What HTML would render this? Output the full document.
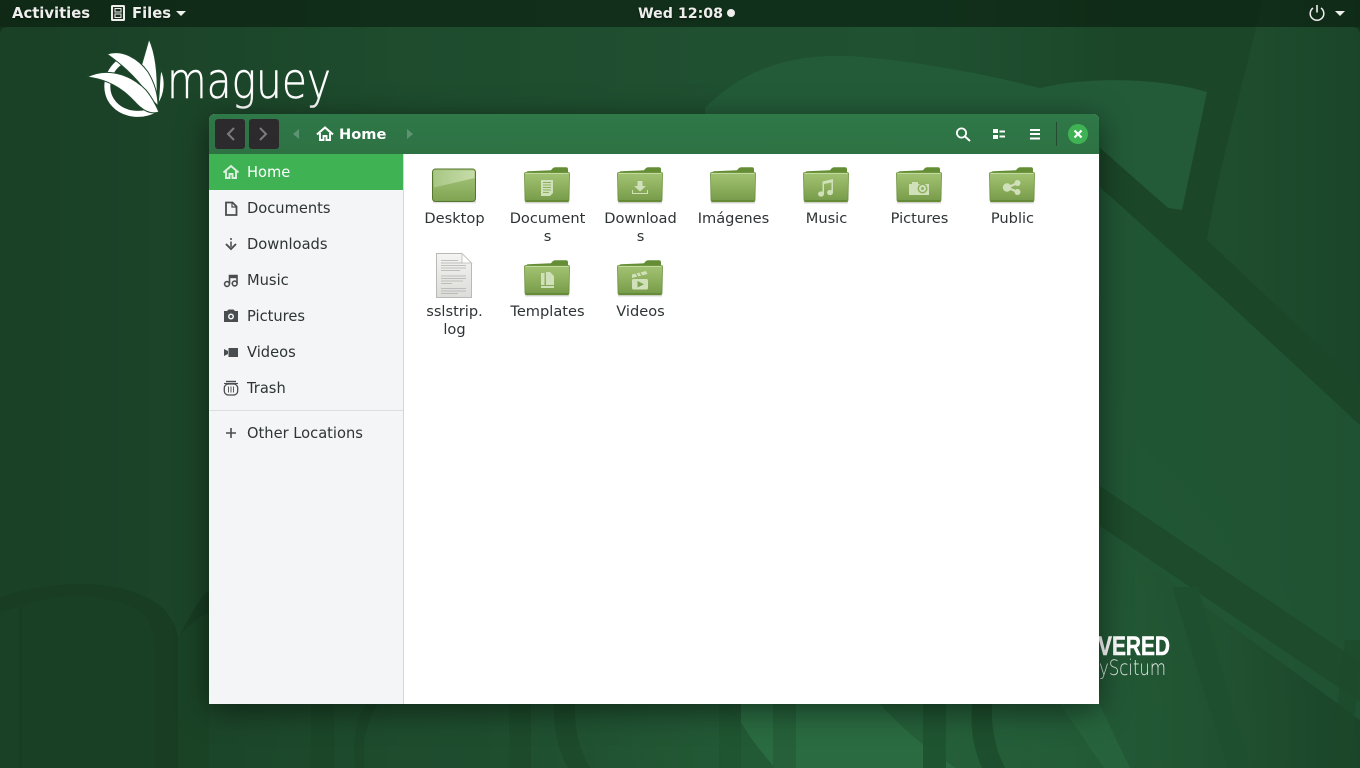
<!DOCTYPE html>
<html><head><meta charset="utf-8"><style>
html,body{margin:0;padding:0;width:1360px;height:768px;overflow:hidden;background:#1a4226}
body{position:relative;font-family:"DejaVu Sans","Liberation Sans",sans-serif}
.a{position:absolute;white-space:nowrap}
#wp{position:absolute;left:0;top:0}
#panel{position:absolute;left:0;top:0;width:1360px;height:27px;background:rgba(8,26,14,.6)}
.pt{position:absolute;top:5px;font-size:14.5px;line-height:18px;font-weight:bold;color:#eeeeec;text-shadow:0 1px 2px rgba(0,0,0,.6);white-space:nowrap}
#win{position:absolute;left:209px;top:114px;width:890px;height:590px;border-radius:6px 6px 0 0;background:#fff;box-shadow:0 6px 30px rgba(0,0,0,.5);overflow:hidden}
#hb{position:absolute;left:0;top:0;width:890px;height:40px;background:linear-gradient(#2f7848,#2e7244)}
#sb{position:absolute;left:0;top:40px;width:194px;height:550px;background:#f4f5f7;border-right:1px solid #d5d7d9}
.row{position:absolute;left:0;width:194px;height:36px;line-height:38px;font-size:14.67px;color:#2e3436;text-indent:38px}
.sel{background:#3fb353;color:#fff}
.sep{position:absolute;left:0;top:256px;width:194px;height:1px;background:#dcdee0}
.lb{position:absolute;width:93px;text-align:center;font-size:14.6px;line-height:18px;color:#2e3436}
#ov{position:absolute;left:0;top:0;pointer-events:none}
</style></head><body>
<svg id="wp" width="1360" height="768" viewBox="0 0 1360 768">
<defs>
<linearGradient id="b1" x1="0" x2="1" y1="0" y2="0">
<stop offset="0" stop-color="#1a4025"/><stop offset=".1" stop-color="#1b4328"/><stop offset=".3" stop-color="#1e4c2d"/><stop offset=".78" stop-color="#205433"/><stop offset=".9" stop-color="#1f4e2e"/><stop offset="1" stop-color="#1b4529"/>
</linearGradient>
<radialGradient id="b2" gradientUnits="userSpaceOnUse" cx="900" cy="740" r="420">
<stop offset="0" stop-color="#2b6e42" stop-opacity=".5"/><stop offset="1" stop-color="#2b6e42" stop-opacity="0"/>
</radialGradient>
<linearGradient id="dt" gradientUnits="userSpaceOnUse" x1="900" x2="1130" y1="0" y2="0">
<stop offset="0" stop-color="#1b4628" stop-opacity="0"/><stop offset="1" stop-color="#1b4628"/>
</linearGradient>
</defs>
<rect width="1360" height="768" fill="url(#b1)"/>
<rect width="1360" height="768" fill="url(#b2)"/>
<!-- dark top area behind the leaf -->
<path d="M900 0H1262C1248 70 1222 150 1207 240L1100 190V130H900Z" fill="url(#dt)"/>
<!-- leaf -->
<path d="M705 108C745 68 790 54 850 56C930 62 1000 78 1040 88C1090 76 1160 78 1207 92L1182 210L1168 208L1100 148V300H705Z" fill="#235b38"/>
<!-- lower leaf right of window -->
<path d="M1100 187L1225 300L1360 425V720L1100 530Z" fill="#225735" opacity=".75"/>
<!-- diagonal bands -->
<path d="M1100 148L1168 208L1182 210L1207 240L1360 385V425L1225 300L1100 187Z" fill="#1b4628"/>
<path d="M1100 486L1360 662V702L1100 526Z" fill="#1d4b2b"/>
<path d="M1172 587H1198L1250 768H1228Z" fill="#1e5030"/>
<path d="M1330 768L1345 640H1360V660L1350 768Z" fill="#1c4a2a" opacity=".6"/>
<!-- bottom-left arcs -->
<path d="M22 606C60 592 110 592 140 612C150 620 155 632 155 645V768H22Z" fill="#193f24"/>
<path d="M178 640C184 628 195 620 209 612V768H178Z" fill="#1a4326"/>
<path d="M0 597C60 578 130 578 165 610C172 620 178 628 178 640V768H155V645C155 632 150 620 140 612C110 592 60 592 22 606V768H19V607L0 612Z" fill="#183d23"/>
<path d="M178 640C186 622 198 600 209 590V612C195 620 184 628 178 640Z" fill="#183d23"/>
<!-- bottom strip -->
<path d="M311 704H334V768H311Z" fill="#1b4628"/>
<path d="M378 704C366 720 362 745 364 768H356C352 745 355 720 366 704Z" fill="#1b4628"/>
<path d="M509 704H531V768H509Z" fill="#1c4a2a"/>
<path d="M554 704H575C574 730 580 750 590 768H568C558 750 553 730 554 704Z" fill="#1c4a2a"/>
<path d="M731 704H880C905 732 935 755 956 768H775C755 745 741 725 731 704Z" fill="#2a6b41"/>
<path d="M719 704H741V768H719Z" fill="#1f5431" opacity=".9"/>
<path d="M773 704H796V768H773Z" fill="#25603a"/>
<path d="M923 704H946V768H923Z" fill="#1f5431"/>
<path d="M972 704H992C991 730 996 750 1005 768H982C974 750 970 730 972 704Z" fill="#1d4e2d"/>
<path d="M1060 704H1099L1130 768H1104Z" fill="#27643d" opacity=".9"/>
<!-- powered by -->
<text x="1098" y="655" font-family="'Liberation Sans',sans-serif" font-weight="bold" font-size="27" fill="#fff" stroke="#fff" stroke-width=".5" textLength="72" lengthAdjust="spacingAndGlyphs">VERED</text>
<text x="1099" y="675" font-family="'DejaVu Sans',sans-serif" font-weight="200" font-size="21" fill="#e4ece6" textLength="67" lengthAdjust="spacingAndGlyphs">yScitum</text>
<!-- desktop corners -->
<path d="M0 27H8Q0 27 0 35Z M1360 27H1352Q1360 27 1360 35Z" fill="#14331e"/>
<!-- logo -->
<path d="M120 62C106 72 103 92 114 104C124 115 142 117 156 109" fill="none" stroke="#fff" stroke-width="6"/>
<g fill="#fff" stroke="#1e4a2c" stroke-width="1">
<path d="M149 39C155 52 158 72 157 98C152 88 146 78 140 70C143 60 146 50 149 39Z"/>
<path d="M107 54C122 49 138 58 148 72C154 82 158 94 158 106C154 102 150 98 147 93C138 80 124 66 107 54Z"/>
<path d="M87 77C105 68 128 72 146 90C151 96 155 103 159 112C150 115 142 110 134 101C122 88 106 79 87 77Z"/>
<path d="M161 70C166 80 165 94 158 104C160 92 159 80 161 70Z"/>
</g>
<text x="167" y="98" font-family="'DejaVu Sans',sans-serif" font-weight="200" font-size="50" fill="#fff" stroke="#fff" stroke-width=".5" textLength="164" lengthAdjust="spacingAndGlyphs">maguey</text>
</svg>

<div id="panel"></div>
<div class="pt" style="left:12px;font-size:14.8px">Activities</div>
<div class="pt" style="left:132px;font-size:14.8px">Files</div>
<div class="pt" style="left:638px;font-size:14.2px">Wed 12:08</div>

<div id="win">
  <div id="hb"></div>
  <div id="sb">
    <div class="row sel" style="top:0">Home</div>
    <div class="row" style="top:36px">Documents</div>
    <div class="row" style="top:72px">Downloads</div>
    <div class="row" style="top:108px">Music</div>
    <div class="row" style="top:144px">Pictures</div>
    <div class="row" style="top:180px">Videos</div>
    <div class="row" style="top:216px">Trash</div>
    <div class="sep"></div>
    <div class="row" style="top:261px">Other Locations</div>
  </div>
  <div class="a" style="left:130px;top:12px;font-size:14.6px;line-height:18px;font-weight:bold;color:#fff">Home</div>
  <div class="lb" style="left:199px;top:96px">Desktop</div>
  <div class="lb" style="left:292px;top:96px">Document<br>s</div>
  <div class="lb" style="left:385px;top:96px">Download<br>s</div>
  <div class="lb" style="left:478px;top:96px">Imágenes</div>
  <div class="lb" style="left:571px;top:96px">Music</div>
  <div class="lb" style="left:664px;top:96px">Pictures</div>
  <div class="lb" style="left:757px;top:96px">Public</div>
  <div class="lb" style="left:199px;top:189px">sslstrip.<br>log</div>
  <div class="lb" style="left:292px;top:189px">Templates</div>
  <div class="lb" style="left:385px;top:189px">Videos</div>
</div>

<svg id="ov" width="1360" height="768" viewBox="0 0 1360 768">
<defs>
<linearGradient id="ff" x1="0" x2="0" y1="0" y2="1"><stop offset="0" stop-color="#a2c373"/><stop offset=".5" stop-color="#8eb05e"/><stop offset="1" stop-color="#759a49"/></linearGradient>
<linearGradient id="sh" x1="0" x2="0" y1="0" y2="1"><stop offset="0" stop-color="#000" stop-opacity=".22"/><stop offset="1" stop-color="#000" stop-opacity="0"/></linearGradient>
<linearGradient id="pg" x1="0" x2="0" y1="0" y2="1"><stop offset="0" stop-color="#f4f4f2"/><stop offset="1" stop-color="#dcdcd9"/></linearGradient>
<linearGradient id="dk" x1="0" x2="0" y1="0" y2="1"><stop offset="0" stop-color="#a8c87f"/><stop offset="1" stop-color="#7ea350"/></linearGradient>
<linearGradient id="dh" x1="0" x2="1" y1="0" y2="0"><stop offset="0" stop-color="#a9c785"/><stop offset="1" stop-color="#c7dcaa"/></linearGradient>
<g id="f">
<rect x="1" y="34.500" width="44" height="3" fill="url(#sh)"/>
<path d="M2 6.500Q2 4.500 4 4.300L27 3.300Q29 .3 31 .3H42Q44 .3 44 2.500V8H2Z" fill="#648d36"/>
<path d="M.5 6.500Q.5 5.500 2 5.500H44Q45.500 5.500 45.500 6.500L45 33Q45 34.700 43 34.700H3Q1 34.700 1 33Z" fill="url(#ff)" stroke="#6a9039" stroke-width=".8"/>
<path d="M1.500 6.500H44.500" stroke="#c2d9a0" stroke-width="1"/>
<path d="M2 33.800H44" stroke="#5f8532" stroke-width="1.200"/>
</g>
</defs>
<!-- panel icons -->
<rect x="111" y="5" width="14" height="16" rx="1.500" fill="#eeeeec"/>
<rect x="113" y="7" width="10" height="12" fill="#1b2e20"/>
<path d="M115 8.500H121V12H115ZM115 14H121V17.500H115Z" fill="none" stroke="#eeeeec" stroke-width="1"/>
<path d="M176 11H186L181 16Z" fill="#eeeeec"/>
<circle cx="731" cy="13" r="4" fill="#eeeeec"/>
<path d="M1313 8A6.800 6.800 0 1 0 1321 8" fill="none" stroke="#eeeeec" stroke-width="1.500"/>
<path d="M1317 5V12.500" stroke="#eeeeec" stroke-width="1.600"/>
<path d="M1335 11H1345L1340 16Z" fill="#eeeeec"/>

<!-- header -->
<rect x="215" y="119" width="30" height="30" rx="3" fill="#2c2a2c"/>
<rect x="249" y="119" width="30" height="30" rx="3" fill="#2c2a2c"/>
<path d="M234 128L228 134L234 140" fill="none" stroke="#7c7c7c" stroke-width="2"/>
<path d="M260 128L266 134L260 140" fill="none" stroke="#7c7c7c" stroke-width="2"/>
<path d="M299 129V139L293 134Z" fill="#5f9272"/>
<path d="M407 129V139L413 134Z" fill="#5f9272"/>
<path d="M317 134.500L325 127.500L333 134.500" fill="none" stroke="#fff" stroke-width="2.100"/>
<path d="M320 133V140H323.500V136H326.500V140H330V133" fill="none" stroke="#fff" stroke-width="1.900"/>
<circle cx="961.500" cy="133" r="4.600" fill="none" stroke="#fff" stroke-width="1.800"/>
<path d="M965 136.500L970 141" stroke="#fff" stroke-width="2"/>
<path d="M993 129H998V133H993ZM993 135H998V139H993ZM999.500 130.500H1005V132.500H999.500ZM999.500 135.500H1005V137.500H999.500Z" fill="#fff"/>
<path d="M1030 129H1040V131H1030ZM1030 133H1040V135H1030ZM1030 137.500H1040V139.500H1030Z" fill="#fff"/>
<rect x="1056" y="122" width="1" height="24" fill="#244b31"/>
<circle cx="1078" cy="134" r="10" fill="#3fb353"/>
<path d="M1074.500 130.500L1081.500 137.500M1081.500 130.500L1074.500 137.500" stroke="#fff" stroke-width="2.200"/>

<!-- sidebar icons -->
<g fill="none" stroke="#dcefdf" stroke-width="1.900">
<path d="M223.500 172.500L231 166L238.500 172.500"/><path d="M226 171V178H229.500V174H232.500V178H236V171"/>
</g>
<g fill="none" stroke="#4a4d50" stroke-width="1.800">
<path d="M226 202.500H232.500L236.500 206.500V215H226Z"/><path d="M232 202V207H236.500" stroke-width="1.200"/>
<path d="M231 238V240M231 241.500V247" stroke-width="1.500"/>
<path d="M226 244L231 249L236 244" stroke-width="1.900"/>
<path d="M229.500 284V275.500H237V283" stroke-width="1.600"/><path d="M229.500 277H237" stroke-width="2.400"/>
<circle cx="227" cy="284" r="2.400" stroke-width="1.600"/><circle cx="234.700" cy="283.500" r="2.400" stroke-width="1.600"/>
<path d="M226 381.500H236" stroke-width="1.400"/>
<rect x="224.300" y="384" width="13.400" height="11" rx="4" stroke-width="1.300"/>
<path d="M228.500 386.500V392.500M231 386.500V392.500M233.500 386.500V392.500" stroke-width=".9"/>
<path d="M224 383.500H238" stroke-width="1.100"/>
</g>
<path d="M224 311H227L228.500 309.500H233.500L235 311H238V322H224Z" fill="#4a4d50"/>
<circle cx="231" cy="316.500" r="3" fill="#f4f5f7"/><circle cx="231" cy="316.500" r="1.500" fill="#4a4d50"/>
<rect x="228.500" y="348" width="9.500" height="9" fill="#4a4d50"/><path d="M224 349L228 351V354L224 356Z" fill="#4a4d50"/>
<path d="M226 433H236M231 428V438" stroke="#4a4d50" stroke-width="1.600"/>

<!-- desktop icon -->
<rect x="433" y="201" width="43" height="3" fill="url(#sh)"/>
<rect x="432.500" y="169" width="43" height="32.500" rx="3" fill="url(#dk)" stroke="#55762f" stroke-width="1"/>
<path d="M434 170.500H474.500V178L434 187.500Z" fill="url(#dh)"/>

<!-- folders -->
<use href="#f" x="524" y="167"/>
<use href="#f" x="617" y="167"/>
<use href="#f" x="710" y="167"/>
<use href="#f" x="803" y="167"/>
<use href="#f" x="896" y="167"/>
<use href="#f" x="989" y="167"/>
<use href="#f" x="524" y="260"/>
<use href="#f" x="617" y="260"/>

<g fill="#d0e0ba">
<!-- documents -->
<path d="M541 180H553V193L550 196H541Z"/>
<path d="M543 182.500H551M543 185H551M543 187.500H551M543 190H551M543 192.500H549" stroke="#8eb05e" stroke-width="1"/>
<!-- downloads -->
<path d="M637.500 181H642.500V186H646L640 191.500L634 186H637.500Z"/>
<path d="M632 190H633V193H647V190H648V194H632Z"/>
<!-- music -->
<path d="M822.500 181.500L833 179V192.500H831.500V182.500L824 184V194H822.500Z"/>
<ellipse cx="821" cy="194" rx="3" ry="2.600"/><ellipse cx="830" cy="192.500" rx="3" ry="2.600"/>
<!-- pictures -->
<path d="M909 184H912V182H918V184H929V195H909Z"/>
<circle cx="922.500" cy="188.500" r="5" fill="#8eb05e"/><circle cx="922.500" cy="188.500" r="3.500"/><circle cx="922.500" cy="188.500" r="1.500" fill="#8eb05e"/>
<!-- public -->
<circle cx="1007" cy="187.500" r="4.200"/><circle cx="1017.500" cy="183" r="3"/><circle cx="1017.500" cy="192" r="3"/>
<path d="M1007 187L1017.500 182.500L1018 183.500L1007.500 188ZM1007 188L1017.500 192.500L1018 191.500L1007.500 187Z" stroke="#d0e0ba"/>
<!-- templates -->
<path d="M546 272H550L554 276V285H546Z"/>
<path d="M541 273H544.500V285H541ZM541 286H554V288H541Z"/>
<!-- videos -->
<rect x="632" y="279" width="16" height="10.500" rx="1.500"/>
<path d="M632 274.500L646 271L647.500 274L632 278Z"/>
<path d="M636 273.500L638 277M640 272.500L642 276" stroke="#8eb05e" stroke-width="1"/>
</g>
<path d="M637.500 281L644 284.300L637.500 287.500Z" fill="#7fa350"/>

<!-- text file -->
<path d="M436.500 253.500H462L471.500 263V297.500H436.500Z" fill="url(#pg)" stroke="#b9b9b6"/>
<path d="M462 253.500V263H471.500Z" fill="#fdfdfc" stroke="#c8c8c5"/>
<path d="M441 260.500H458M441 263H462M441 265.500H466M441 268H466M441 270.500H460M441 276H466M441 278.500H466M441 281H463M441 283.500H452M441 288.500H466M441 291H466M441 293.500H458" stroke="#b0b0ae" stroke-width=".7"/>
</svg>
</body></html>
